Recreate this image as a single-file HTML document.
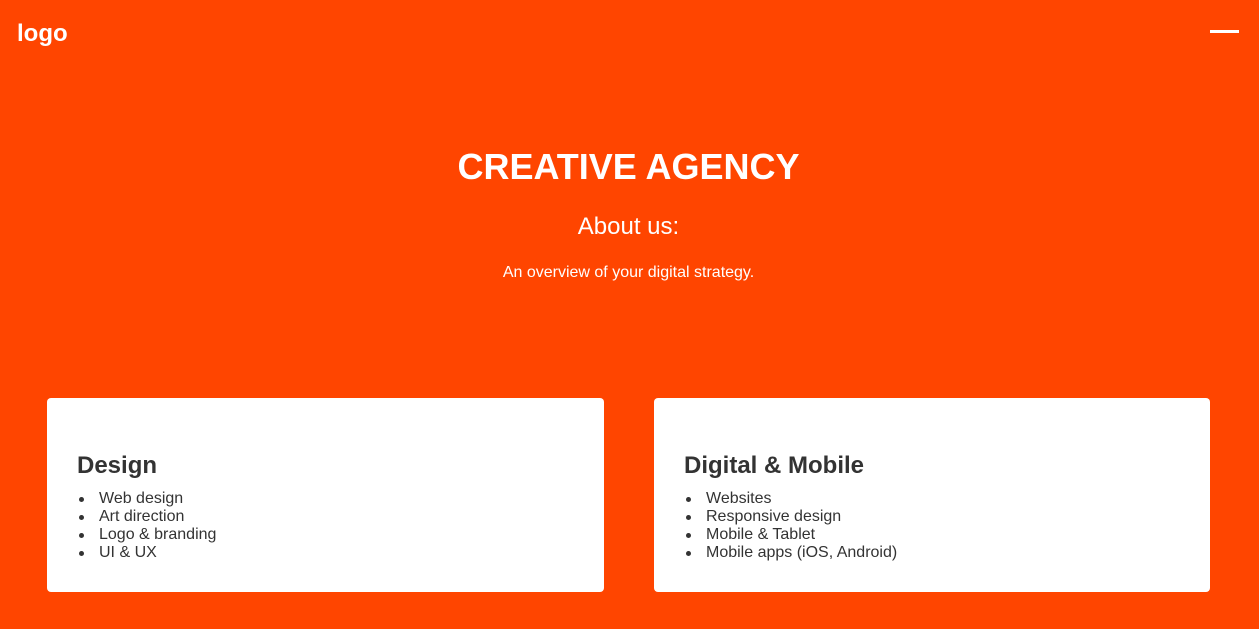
<!DOCTYPE html>
<html><head><style>
body{margin:0;width:1259px;height:629px;background:#ff4500;font-family:"Liberation Sans",sans-serif;position:relative;overflow:hidden}
.logo{position:absolute;left:17px;top:20px;color:#fff;font-weight:bold;font-size:24px}
.burger{position:absolute;left:1210px;top:30px;width:29px;height:3px;background:#fff}
h1{position:absolute;top:146px;left:0;width:1257px;text-align:center;margin:0;color:#fff;font-size:36px;font-weight:bold}
h2{position:absolute;top:213px;left:0;width:1257px;text-align:center;margin:0;color:#fff;font-size:24px;font-weight:normal}
p.o{position:absolute;top:264px;left:0;width:1257px;text-align:center;margin:0;color:#fff;font-size:16px}
.card{position:absolute;top:398px;height:194px;background:#fff;border-radius:4px;box-sizing:border-box;padding:54px 30px 0;color:#333}
.card h3{margin:0 0 10px;font-size:24px;font-weight:bold;line-height:28px}
.card ul{margin:0;padding-left:22px;font-size:16px;line-height:18px;list-style:none}
.card li{position:relative}
.card li:before{content:"";position:absolute;left:-20px;top:7px;width:5px;height:5px;border-radius:50%;background:#333}
</style></head><body>
<div class="logo">logo</div><div class="burger"></div>
<h1>CREATIVE AGENCY</h1>
<h2>About us:</h2>
<p class="o">An overview of your digital strategy.</p>
<div class="card" style="left:47px;width:557px"><h3>Design</h3><ul><li>Web design</li><li>Art direction</li><li>Logo &amp; branding</li><li>UI &amp; UX</li></ul></div>
<div class="card" style="left:654px;width:556px"><h3>Digital &amp; Mobile</h3><ul><li>Websites</li><li>Responsive design</li><li>Mobile &amp; Tablet</li><li>Mobile apps (iOS, Android)</li></ul></div>
</body></html>
